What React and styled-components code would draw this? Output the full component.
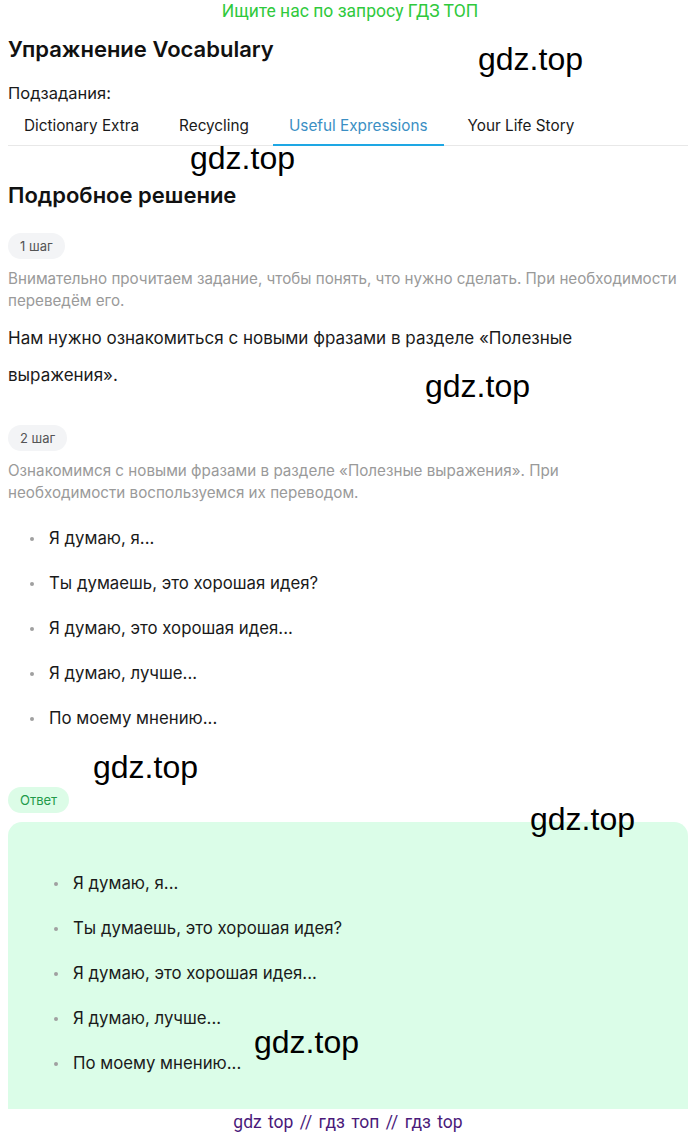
import React from 'react';
import styled, { createGlobalStyle } from 'styled-components';

const Global = createGlobalStyle`
  html, body { margin: 0; padding: 0; background: #fff; }
  body { font-family: Inter, "Noto Sans", sans-serif; color: #1a1a1a; }
  * { box-sizing: border-box; }
`;

const Page = styled.div`
  position: relative;
  width: 700px;
  height: 1136px;
  overflow: hidden;
  padding: 0 12px 0 8px;
`;

const Banner = styled.div`
  text-align: center;
  color: #2fc93c;
  font-family: Roboto, sans-serif;
  font-size: 17.5px;
  line-height: 22px;
  padding-left: 4px;
`;

const Title = styled.h1`
  margin: 13px 0 0;
  font-size: 22px;
  font-weight: 600;
  line-height: 28px;
  color: #111;
`;

const SubLabel = styled.div`
  margin-top: 20px;
  font-size: 16.5px;
  line-height: 20px;
`;

const Tabs = styled.div`
  display: flex;
  gap: 8px;
  margin-top: 8px;
  border-bottom: 1px solid #e8e8e8;
`;

const Tab = styled.div`
  padding: 5px 16px 8px;
  font-size: 15.3px;
  line-height: 20px;
  color: ${p => (p.$active ? '#3b8fc4' : '#1a1a1a')};
  border-bottom: 2px solid ${p => (p.$active ? '#1ea7e4' : 'transparent')};
  margin-bottom: -1px;
`;

const Heading = styled.h2`
  margin: 35px 0 0;
  font-size: 22px;
  font-weight: 600;
  line-height: 28px;
  color: #111;
`;

const Pill = styled.div`
  display: inline-block;
  margin-top: ${p => p.$mt || 0}px;
  padding: 0 12px;
  height: 26px;
  line-height: 26px;
  border-radius: 13px;
  font-size: 13px;
  background: ${p => (p.$green ? '#dcfce7' : '#f3f4f6')};
  color: ${p => (p.$green ? '#219a4a' : '#555')};
`;

const Hint = styled.p`
  margin: 9px 0 0;
  font-size: 15.2px;
  line-height: 22px;
  color: #9a9a9a;
`;

const Text = styled.p`
  margin: 8px 0 0;
  font-size: 17px;
  line-height: 37px;
  color: #1a1a1a;
`;

const List = styled.ul`
  margin: ${p => p.$mt || 0}px 0 0;
  padding: 0 0 0 ${p => p.$indent || 41}px;
  list-style: none;
`;

const Item = styled.li`
  position: relative;
  font-size: 16.8px;
  line-height: 20px;
  color: #1a1a1a;
  & + & { margin-top: 25px; }
  &::before {
    content: '';
    position: absolute;
    left: -19px;
    top: 9px;
    width: 4px;
    height: 4px;
    border-radius: 50%;
    background: #a0a0a0;
  }
`;

const Answer = styled.div`
  margin-top: 9px;
  height: 287px;
  background: #dbfde8;
  border-radius: 14px 14px 0 0;
  padding-top: 51px;
`;

const Footer = styled.div`
  text-align: center;
  font-family: Roboto, sans-serif;
  font-size: 17.5px;
  color: #4a1a7a;
  margin-top: 3px;
  word-spacing: 2px;
`;

const Mark = styled.div`
  position: absolute;
  left: ${p => p.$x}px;
  top: ${p => p.$y}px;
  font-family: "Liberation Sans", Arial, sans-serif;
  font-size: 32px;
  color: #000;
  line-height: 36px;
  pointer-events: none;
`;

const phrases = [
  'Я думаю, я...',
  'Ты думаешь, это хорошая идея?',
  'Я думаю, это хорошая идея...',
  'Я думаю, лучше...',
  'По моему мнению...',
];

const tabs = ['Dictionary Extra', 'Recycling', 'Useful Expressions', 'Your Life Story'];

export default function App() {
  return (
    <Page>
      <Global />
      <Banner>Ищите нас по запросу ГДЗ ТОП</Banner>
      <Title>Упражнение Vocabulary</Title>
      <SubLabel>Подзадания:</SubLabel>
      <Tabs>
        {tabs.map(t => (
          <Tab key={t} $active={t === 'Useful Expressions'}>{t}</Tab>
        ))}
      </Tabs>
      <Heading>Подробное решение</Heading>
      <Pill $mt={24}>1 шаг</Pill>
      <Hint>
        Внимательно прочитаем задание, чтобы понять, что нужно сделать. При необходимости
        переведём его.
      </Hint>
      <Text>
        Нам нужно ознакомиться с новыми фразами в разделе «Полезные
        <br />
        выражения».
      </Text>
      <div>
        <Pill $mt={31}>2 шаг</Pill>
      </div>
      <Hint>
        Ознакомимся с новыми фразами в разделе «Полезные выражения». При
        <br />
        необходимости воспользуемся их переводом.
      </Hint>
      <List $mt={24}>
        {phrases.map(p => <Item key={p}>{p}</Item>)}
      </List>
      <div>
        <Pill $green $mt={59}>Ответ</Pill>
      </div>
      <Answer>
        <List $indent={65}>
          {phrases.map(p => <Item key={p}>{p}</Item>)}
        </List>
      </Answer>
      <Footer>gdz top // гдз топ // гдз top</Footer>

      <Mark $x={478} $y={41}>gdz.top</Mark>
      <Mark $x={190} $y={140}>gdz.top</Mark>
      <Mark $x={425} $y={368}>gdz.top</Mark>
      <Mark $x={93} $y={749}>gdz.top</Mark>
      <Mark $x={530} $y={801}>gdz.top</Mark>
      <Mark $x={254} $y={1024}>gdz.top</Mark>
    </Page>
  );
}
